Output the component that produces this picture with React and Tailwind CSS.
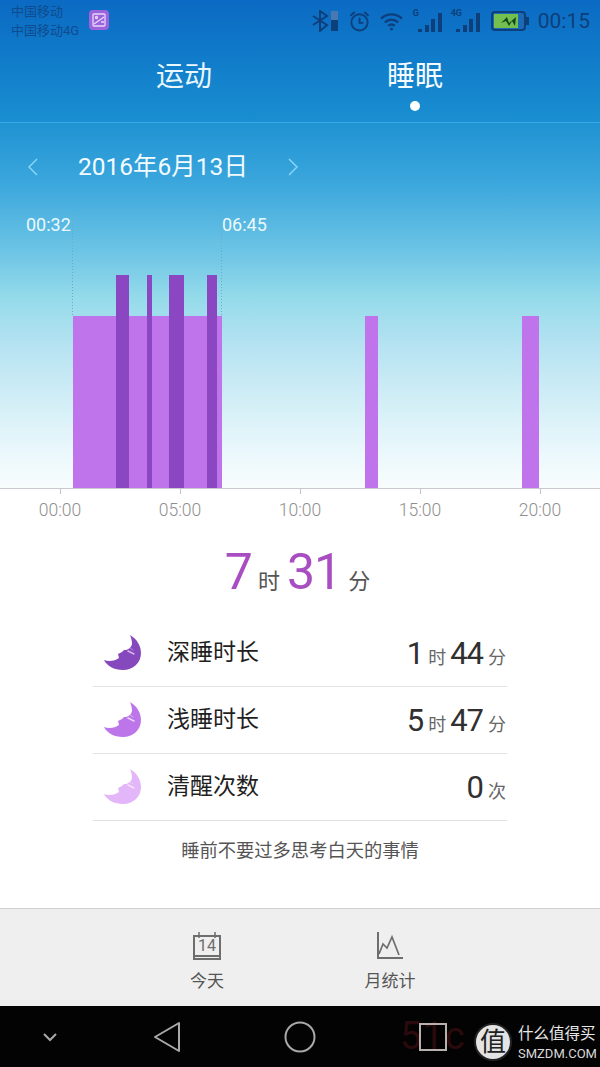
const CJK = { fontFamily: 'Roboto, "Noto Sans CJK SC", sans-serif' };

function Moon({ color, eye }) {
  return (
    <svg width="38" height="36" viewBox="0 0 38 36">
      <path d="M26 0 C33 4 37 11 37 18 C37 28 29 35 19 35 C10 35 3 31 0 25 C5 27 11 26 15 23 L14 19 L18 17 L20 15 C24 15 27 13 28 9 C28 5 27 3 26 0 Z" fill={color} />
      <path d="M24 16 L30 19" stroke={eye} strokeWidth="1.5" strokeLinecap="round" fill="none" />
      <path d="M26 13 L29 15" stroke={eye} strokeWidth="1" strokeLinecap="round" fill="none" opacity="0.6" />
    </svg>
  );
}

function Signal({ label }) {
  return (
    <div className="relative w-[30px] h-[24px]">
      <span className="absolute left-0 top-[-1px] text-[9px] leading-[10px] font-bold text-[#0d3f7a]">{label}</span>
      <svg className="absolute left-0 top-0" width="30" height="24" viewBox="0 0 30 24" fill="#0d3f7a">
        <rect x="5" y="20" width="4" height="3" />
        <rect x="12" y="16" width="4" height="7" />
        <rect x="18" y="10" width="4" height="13" />
        <rect x="25" y="4" width="4" height="19" />
      </svg>
    </div>
  );
}

function StatusBar() {
  return (
    <div className="h-[43px] flex items-start justify-between pr-[10px] text-[#0f4c8f]">
      <div className="flex items-start pl-[11px] pt-[3px]">
        <div className="text-[13px] leading-[18.5px]">
          <div>中国移动</div>
          <div>中国移动4G</div>
        </div>
        <div className="ml-[10px] mt-[7px] w-[20px] h-[20px] rounded-[4px] bg-[#9b63dc] flex items-center justify-center">
          <svg width="14" height="14" viewBox="0 0 14 14" fill="none" stroke="#e9d8fb" strokeWidth="1.3">
            <rect x="1" y="1" width="12" height="12" rx="1" />
            <path d="M2 11 L12 4 M9 9h3" />
            <circle cx="4.5" cy="4.5" r="1" />
          </svg>
        </div>
      </div>
      <div className="flex items-center pt-[9px] gap-[10px]">
        <svg width="28" height="22" viewBox="0 0 28 22" fill="none" stroke="#0d3f7a" strokeWidth="2">
          <path d="M2 6 L16 15 L9 21 V1 L16 6 L2 15" />
          <rect x="20" y="1" width="7" height="20" fill="#4a78b0" stroke="none" />
          <rect x="20" y="10" width="7" height="11" fill="#0d3f7a" stroke="none" />
        </svg>
        <svg width="21" height="22" viewBox="0 0 22 23" fill="none" stroke="#0d3f7a" strokeWidth="2">
          <circle cx="11" cy="13" r="8.5" />
          <path d="M11 8 V13.5 H15" />
          <path d="M1.5 6 L6 2 M20.5 6 L16 2" />
        </svg>
        <svg width="23" height="19" viewBox="0 0 24 20" fill="none" stroke="#0d3f7a" strokeWidth="2.4">
          <path d="M1 7 C7 1 17 1 23 7" />
          <path d="M5 11 C9 7 15 7 19 11" />
          <path d="M8.5 14.5 C10.5 13 13.5 13 15.5 14.5" />
          <circle cx="12" cy="18" r="1.6" fill="#0d3f7a" stroke="none" />
        </svg>
        <div className="flex items-center gap-[8px]">
          <Signal label="G" />
          <Signal label="4G" />
        </div>
        <svg width="38" height="20" viewBox="0 0 38 20">
          <rect x="1" y="1" width="33" height="18" rx="3" fill="#1c6ab5" stroke="#0d3f7a" strokeWidth="2" />
          <rect x="3" y="3" width="24" height="14" fill="#74c04f" />
          <rect x="35" y="6" width="3" height="8" fill="#0d3f7a" />
          <path d="M10 12 L16 6 L18 12 L25 6 L24 15 L21 10 L18 15 L15 10 Z" fill="#12481f" />
        </svg>
        <span className="ml-[-1px] text-[21px] leading-[24px] text-[#0d3f7a]">00:15</span>
      </div>
    </div>
  );
}

function Tabs() {
  return (
    <div className="relative h-[79px] flex">
      <div className="w-[370px] pl-[156px] pt-[15px] text-[28px] leading-[38px] text-[#e9f7ff]">运动</div>
      <div className="w-[230px] pl-[17px] pt-[15px] flex flex-col items-start">
        <span className="text-[28px] leading-[38px] text-[#f4fbff]">睡眠</span>
        <span className="mt-[5px] ml-[23px] w-[10px] h-[10px] rounded-full bg-white" />
      </div>
    </div>
  );
}

function Chart() {
  return (
    <div className="relative h-[278px]">
      <svg className="block" width="600" height="278" viewBox="0 0 600 278">
        <line x1="72.5" y1="5" x2="72.5" y2="106" stroke="#6aa9c8" strokeWidth="1" strokeDasharray="1 2" />
        <line x1="221.5" y1="5" x2="221.5" y2="106" stroke="#6aa9c8" strokeWidth="1" strokeDasharray="1 2" />
        <rect x="73" y="106" width="149" height="172" fill="#c074ec" />
        <rect x="365" y="106" width="13" height="172" fill="#c074ec" />
        <rect x="522" y="106" width="17" height="172" fill="#c074ec" />
        <rect x="116" y="65" width="13" height="213" fill="#8a47c1" />
        <rect x="147" y="65" width="5" height="213" fill="#8a47c1" />
        <rect x="169" y="65" width="15" height="213" fill="#8a47c1" />
        <rect x="207" y="65" width="10" height="213" fill="#8a47c1" />
      </svg>
      <span className="absolute left-[26px] top-[5px] text-[18px] leading-[20px] text-[#eaf8fc]">00:32</span>
      <span className="absolute left-[222px] top-[5px] text-[18px] leading-[20px] text-[#eaf8fc]">06:45</span>
    </div>
  );
}

function Axis() {
  return (
    <div className="flex h-[46px] border-t border-[#c9c9cf]">
      {["00:00", "05:00", "10:00", "15:00", "20:00"].map((t) => (
        <div key={t} className="w-[120px] flex flex-col items-center">
          <span className="w-px h-[5px] bg-[#c4c4c8]" />
          <span className="mt-[4px] text-[17.5px] leading-[24px] font-light text-[#8f8f8f]">{t}</span>
        </div>
      ))}
    </div>
  );
}

function Row({ color, eye, label, children, border = true }) {
  return (
    <div className={`h-[67px] flex items-center justify-between pl-[11px] ${border ? "border-b border-[#e2e2e2]" : ""}`}>
      <div className="flex items-center">
        <Moon color={color} eye={eye} />
        <span className="ml-[25px] text-[23px] leading-[30px] text-[#1f1f1f]">{label}</span>
      </div>
      <div className="flex items-baseline pr-[1px] pt-[2px]">{children}</div>
    </div>
  );
}

const num = "text-[31px] leading-[36px] tracking-[-1px] text-[#303030]";
const unit = "ml-[5px] text-[18px] leading-[24px] text-[#666]";

export default function App() {
  return (
    <div className="w-[600px] h-[1067px] overflow-hidden bg-white flex flex-col" style={CJK}>
      <div className="h-[122px] bg-gradient-to-b from-[#0b6ac3] to-[#1a8fd1]">
        <StatusBar />
        <Tabs />
      </div>
      <div className="h-px bg-[#3aa9e6]" />
      <div className="h-[365px] bg-[linear-gradient(180deg,#2093d3_0%,#3aa6dc_16%,#6cc4e5_35%,#95dbea_48%,#b8e3f2_62%,#d2eef6_76%,#eaf8fc_90%,#f8fcfd_100%)]">
        <div className="h-[87px] flex items-center">
          <svg className="ml-[27px] mb-[-1px]" width="12" height="18" viewBox="0 0 12 18" fill="none" stroke="#8fd8f7" strokeWidth="1.4">
            <path d="M10 1 L2 9 L10 17" />
          </svg>
          <span className="ml-[39px] text-[24.5px] leading-[32px] text-[#f2fbff]">2016年6月13日</span>
          <svg className="ml-[39px] mb-[-1px]" width="12" height="18" viewBox="0 0 12 18" fill="none" stroke="#8fd8f7" strokeWidth="1.4">
            <path d="M2 1 L10 9 L2 17" />
          </svg>
        </div>
        <Chart />
      </div>
      <Axis />
      <div className="h-[86px] flex items-baseline justify-center pt-[8px] pr-[5px]">
        <span className="text-[50px] leading-[60px] text-[#a94ec2]">7</span>
        <span className="ml-[5px] text-[22px] text-[#555]">时</span>
        <span className="ml-[7px] text-[50px] leading-[60px] tracking-[-1px] text-[#a94ec2]">31</span>
        <span className="ml-[7px] text-[22px] text-[#555]">分</span>
      </div>
      <div className="mx-[93px] flex flex-col">
        <Row color="#8549bd" eye="#d9b5f0" label="深睡时长">
          <span className={num}>1</span><span className={unit}>时</span>
          <span className={`${num} ml-[4px]`}>44</span><span className={unit}>分</span>
        </Row>
        <Row color="#bd76ea" eye="#ecd5fa" label="浅睡时长">
          <span className={num}>5</span><span className={unit}>时</span>
          <span className={`${num} ml-[4px]`}>47</span><span className={unit}>分</span>
        </Row>
        <Row color="#e2b6f8" eye="#f4e4fc" label="清醒次数">
          <span className={num}>0</span><span className={unit}>次</span>
        </Row>
      </div>
      <div className="h-[87px] pt-[16px] text-center text-[18.3px] leading-[28px] text-[#555]">睡前不要过多思考白天的事情</div>
      <div className="h-[98px] bg-[#efefef] border-t border-[#cfcfcf] flex text-[#555]">
        <div className="w-[298px] flex flex-col items-center pl-[116px] pt-[22px]">
          <svg width="30" height="32" viewBox="0 0 30 32" fill="none" stroke="#6e6e6e" strokeWidth="2">
            <path d="M2 5 H28 V28 H2 Z" />
            <path d="M2 25 H28" />
            <path d="M7 1 V7 M23 1 V7" strokeWidth="1.5" />
          </svg>
          <span className="mt-[-27px] h-[20px] text-[16px] leading-[20px] text-[#6e6e6e]">14</span>
          <span className="mt-[13px] text-[17px] leading-[24px]">今天</span>
        </div>
        <div className="w-[184px] flex flex-col items-center pt-[22px]">
          <svg width="30" height="32" viewBox="0 0 30 32" fill="none" stroke="#6e6e6e" strokeWidth="2">
            <path d="M3 1 V27 H28" />
            <path d="M4 23 L8 13 L12 17 L17 6 L24 24" strokeWidth="1.7" />
          </svg>
          <span className="mt-[6px] text-[17px] leading-[24px]">月统计</span>
        </div>
      </div>
      <div className="relative h-[61px] bg-[#040303] flex items-center">
        <svg className="ml-[42px]" width="16" height="10" viewBox="0 0 16 10" fill="none" stroke="#a9a9a9" strokeWidth="2">
          <path d="M2 2 L8 8 L14 2" />
        </svg>
        <svg className="ml-[94px]" width="30" height="32" viewBox="0 0 30 32" fill="none" stroke="#a9a9a9" strokeWidth="2">
          <path d="M27 2 V30 L3 16 Z" strokeLinejoin="round" />
        </svg>
        <svg className="ml-[102px]" width="32" height="32" viewBox="0 0 32 32" fill="none" stroke="#a9a9a9" strokeWidth="2">
          <circle cx="16" cy="16" r="14.5" />
        </svg>
        <span className="absolute left-[400px] top-[6px] text-[38px] leading-[48px] tracking-[1px] text-[#2a0a0c]">51c</span>
        <svg className="relative ml-[103px]" width="28" height="28" viewBox="0 0 28 28" fill="none" stroke="#b9b0b0" strokeWidth="2">
          <rect x="1" y="1" width="26" height="26" />
        </svg>
        <div className="absolute left-[474px] top-[17px] w-[38px] h-[38px] rounded-full bg-[#e4e4e4] border-2 border-[#222] flex items-center justify-center text-[26px] leading-[30px] text-[#222]">值</div>
        <div className="absolute left-[518px] top-[18px] flex flex-col">
          <span className="text-[15.5px] leading-[20px] text-[#e8e8e8]">什么值得买</span>
          <span className="mt-[2px] text-[13px] leading-[16px] text-[#d8d8d8]">SMZDM.COM</span>
        </div>
      </div>
    </div>
  );
}
